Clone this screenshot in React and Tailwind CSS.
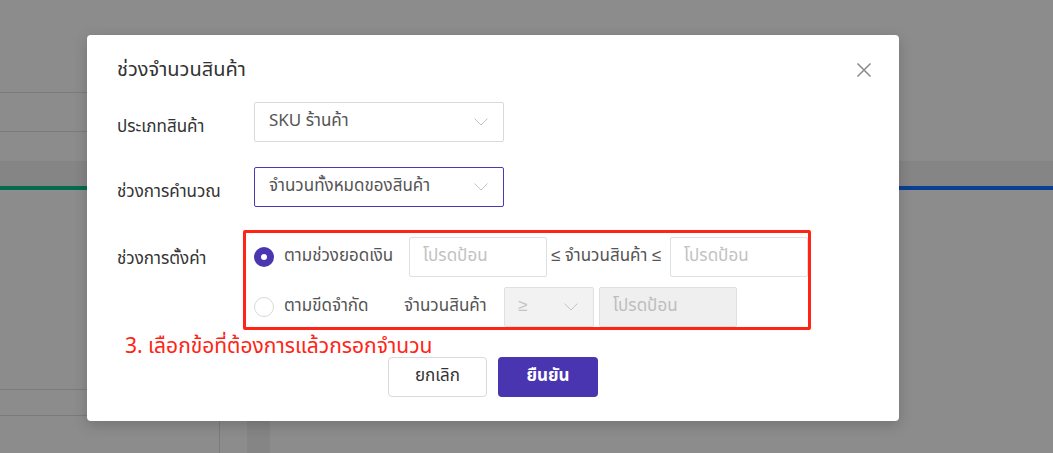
import React from "react";

const font = { fontFamily: '"Noto Sans Thai", "Noto Sans", "Liberation Sans", sans-serif' };

function Chevron({ className = "" }) {
  return (
    <svg width="14" height="8" viewBox="0 0 14 8" className={className} fill="none">
      <path d="M0.5 0.5 L7 7 L13.5 0.5" stroke="currentColor" strokeWidth="1" />
    </svg>
  );
}

function Select({ text, active }) {
  return (
    <div
      className={`flex h-[40px] w-[250px] items-center justify-between rounded-[2px] border pl-[14px] pr-[15px] ${
        active ? "border-[#4b38b3]" : "border-[#d9d9d9]"
      }`}
    >
      <span className="text-[17px] text-[#555]">{text}</span>
      <Chevron className="text-[#c4c4c4]" />
    </div>
  );
}

function Input({ disabled }) {
  return (
    <div
      className={`flex h-[40px] w-[138px] items-center rounded-[2px] border border-[#e0e0e0] pl-[13px] text-[17px] ${
        disabled ? "bg-[#efefef] text-[#bdbdbd]" : "bg-white text-[#c2c2c2]"
      }`}
    >
      โปรดป้อน
    </div>
  );
}

export default function App() {
  return (
    <div className="relative h-[453px] w-[1053px] overflow-hidden bg-[#8c8c8c]" style={font}>
      {/* background page */}
      <div className="flex h-full flex-col">
        <div className="flex h-[161px]">
          <div className="w-[220px] pt-[92px]">
            <div className="h-px bg-[#7b7b7b]" />
            <div className="h-[38px]" />
            <div className="h-px bg-[#7b7b7b]" />
          </div>
        </div>
        <div className="h-[25px] bg-[#858585]" />
        <div className="flex h-[4px]">
          <div className="w-[450px] bg-[#046b4f]" />
          <div className="flex-1 bg-[#0a3f91]" />
        </div>
        <div className="flex flex-1">
          <div className="w-[220px] border-r border-[#7b7b7b] pt-[199px]">
            <div className="h-px bg-[#7b7b7b]" />
            <div className="h-[25px]" />
            <div className="h-px bg-[#7b7b7b]" />
          </div>
          <div className="ml-[27px] w-[23px] bg-[#858585]" />
        </div>
      </div>

      {/* modal */}
      <div className="absolute left-[87px] top-[35px] h-[386px] w-[812px] rounded-[4px] bg-white shadow-[0_4px_14px_rgba(0,0,0,0.18)]">
        <div className="flex items-center justify-between pl-[30px] pr-[27px] pt-[22px]">
          <div className="text-[20px] leading-[26px] text-[#333]">ช่วงจำนวนสินค้า</div>
          <svg width="16" height="16" viewBox="0 0 16 16" className="text-[#8a8a8a]">
            <path d="M1.5 1.5 L14.5 14.5 M14.5 1.5 L1.5 14.5" stroke="currentColor" strokeWidth="1.5" />
          </svg>
        </div>

        <div className="mt-[19px] flex flex-col pl-[30px]">
          <div className="flex items-center">
            <div className="w-[137px] pt-[11px] text-[17px] text-[#333]">ประเภทสินค้า</div>
            <Select text="SKU ร้านค้า" />
          </div>
          <div className="mt-[25px] flex items-center">
            <div className="w-[137px] pt-[11px] text-[17px] text-[#333]">ช่วงการคำนวณ</div>
            <Select text="จำนวนทั้งหมดของสินค้า" active />
          </div>
          <div className="mt-[23px] flex items-start">
            <div className="w-[137px] pt-[17px] text-[17px] text-[#333]">ช่วงการตั้งค่า</div>
            <div className="-ml-[11px] flex flex-col gap-[10px] rounded-[2px] border-[3px] border-[#ff2416] pl-[8px] pt-[4px]">
              <div className="flex items-center whitespace-nowrap text-[17px]">
                <div className="flex h-[20px] w-[20px] items-center justify-center rounded-full bg-[#4a37b0]">
                  <div className="h-[6px] w-[6px] rounded-full bg-white" />
                </div>
                <span className="ml-[10px] w-[125px] text-[#555]">ตามช่วงยอดเงิน</span>
                <Input />
                <span className="ml-[4px] mr-[5px] w-[114px] text-[#555]">≤ จำนวนสินค้า ≤</span>
                <Input />
              </div>
              <div className="flex items-center whitespace-nowrap text-[17px]">
                <div className="h-[20px] w-[20px] rounded-full border border-[#d9d9d9] bg-white" />
                <span className="ml-[10px] w-[120px] text-[#555]">ตามขีดจำกัด</span>
                <span className="w-[100px] text-[#555]">จำนวนสินค้า</span>
                <div className="flex h-[40px] w-[90px] items-center justify-between rounded-[2px] border border-[#e0e0e0] bg-[#f2f2f2] pl-[13px] pr-[15px] text-[#c4c4c4]">
                  <span>≥</span>
                  <Chevron />
                </div>
                <div className="ml-[5px]">
                  <Input disabled />
                </div>
              </div>
            </div>
          </div>
        </div>

        <div className="h-[27px] pl-[38px] pt-[4px] text-[21px] leading-[26px] text-[#ff2416]">
          3. เลือกข้อที่ต้องการแล้วกรอกจำนวน
        </div>

        <div className="flex justify-center gap-[11px]">
          <button className="h-[40px] w-[99px] rounded-[4px] border border-[#d9d9d9] bg-white text-[17px] text-[#333]">
            ยกเลิก
          </button>
          <button className="h-[40px] w-[100px] rounded-[4px] bg-[#4a35b0] text-[17px] font-bold text-white">
            ยืนยัน
          </button>
        </div>
      </div>
    </div>
  );
}
